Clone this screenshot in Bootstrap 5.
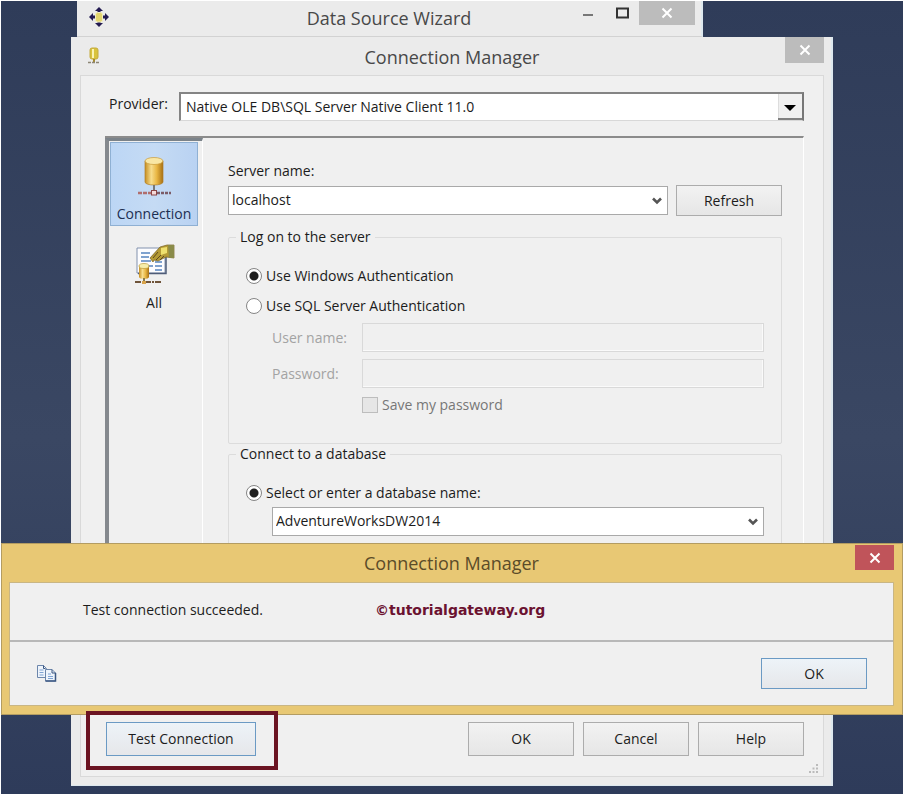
<!DOCTYPE html>
<html lang="en">
<head>
<meta charset="utf-8">
<meta name="viewport" content="width=device-width, initial-scale=1">
<title>Connection Manager</title>
<link href="https://cdn.jsdelivr.net/npm/bootstrap@5.3.0/dist/css/bootstrap.min.css" rel="stylesheet">
<style>
  body { font: 14px/20px "Open Sans", "Noto Sans", sans-serif; color: #1c1c1c; background: #fff; }
  .desktop { margin: 1px 2px 2px 1px; padding-bottom: 8px; background: linear-gradient(#2f3c59, #3a4763 55%, #2e3b5a); }
  .win { background: #ebebeb; border-right: 2px solid #dde8ee; }
  .win-back { margin-left: 76px; margin-right: 200px; height: 36px; border-bottom: 1px solid #d2d2d2; }
  .win-main { margin: 0 70px; padding: 0 7px 8px 9px; border-bottom: 1px solid #dde8ee; }
  .bar { position: relative; text-align: center; font-size: 18px; line-height: 34px; color: #484848; }
  .win-main .bar { height: 38px; line-height: 40px; }
  .bar-icon { position: absolute; left: 12px; top: 6px; }
  .win-main .bar-icon { left: 6px; top: 10px; }
  .bar-tools { position: absolute; right: 6px; top: 0; }
  .win-main .bar-tools { right: 0; }
  .tool { border: 0; padding: 0; background: transparent; width: 34px; height: 24px; display: block; }
  .tool svg { display: block; margin: auto; }
  .tool-close { background: #bcbcbc; width: 56px; }
  .win-main .tool-close { width: 39px; height: 26px; }
  .client { background: #f0f0f0; border: 1px solid #d9d9d9; padding: 16px 19px 6px 24px; }
  .provider-label { width: 74px; padding-left: 4px; margin-top: 2px; }
  .combo { height: 29px; font-size: 14px; line-height: 20px; color: #1c1c1c; border: 1px solid #a9a9a9; border-radius: 0; padding: 0 28px 1px 3px;
    background: #fff url("data:image/svg+xml,%3Csvg xmlns='http://www.w3.org/2000/svg' width='10' height='8'%3E%3Cpath d='M1 1.500 5 5.500l4-4' fill='none' stroke='%23555' stroke-width='2.600'/%3E%3C/svg%3E") no-repeat right 5px center / 10px 8px; }
  .combo-classic { border: 2px solid #848484; border-right-color: #777; border-bottom: 1px solid #d8d8d8; padding-left: 5px;
    background: #fff url("data:image/svg+xml,%3Csvg xmlns='http://www.w3.org/2000/svg' width='24' height='26'%3E%3Cpath fill='%23f0f0f0' d='M0 0h24v26H0z'/%3E%3Cpath fill='%23808080' d='M0 24h24v2H0z'/%3E%3Cpath fill='%23ddd' d='M0 0h1v24H0z'/%3E%3Cpath d='M6 11h12l-6 6z'/%3E%3C/svg%3E") no-repeat right 0 top 0 / 24px 26px; }
  .panel { margin-top: 15px; min-height: 570px; border-top: 2px solid #8b8b8b; border-right: 1px solid #fff; }
  .side { width: 98px; border-left: 4px solid #85898e; border-top: 3px solid #7b838a; border-right: 1px solid #fff; padding: 1px 4px 0 1px; }
  .side .nav-link { color: #1c1c1c; padding: 14px 0 0; height: 84px; border: 1px solid transparent; border-radius: 0; text-align: center; white-space: nowrap; }
  .side .nav-link svg { display: block; margin: 0 auto 7px; }
  .side .nav-link + .nav-link { padding-top: 17px; }
  .side .nav-link.active { background: linear-gradient(90deg, #bcd6f5, #c5dbf4 50%, #b9d2f2); border-color: #8fb0d3; color: #1c2f52; }
  .form-area { padding: 23px 21px 0 25px; }
  .group { border: 1px solid #dcdcdc; border-radius: 2px; padding: 0 17px; }
  .group legend { font-size: 14px; line-height: 20px; margin: 0 0 19px -10px; padding: 0 4px; }
  .group-login { margin-top: 11px; padding-bottom: 28px; }
  .radio-line { display: flex; align-items: center; gap: 4px; height: 20px; }
  .radio-line + .radio-line { margin-top: 10px; }
  .radio-line input, .check { appearance: none; flex: none; width: 16px; height: 16px; margin: 0; border: 1px solid #858585; border-radius: 50%; background: #fff; }
  .radio-line input:checked { background: radial-gradient(circle, #202020 4px, #fff 5px); }
  .check { border-radius: 0; border-color: #bdbdbd; background: #e6e6e6; }
  .indent { margin-left: 26px; }
  .field-gap { margin-top: 7px; }
  .field-label { width: 90px; color: #a3a3a3; }
  .save-label { color: #777; }
  .field { height: 29px; border: 1px solid #d9d9d9; border-radius: 0; background: #f0f0f0 !important; box-shadow: inset -1px -1px #fafafa; }
  .push { border: 1px solid #acacac; border-radius: 0; padding: 0; width: 106px; height: 34px; font-size: 14px; line-height: 20px; color: #1c1c1c; background: linear-gradient(#f2f2f2, #e6e6e6); }
  .push-short { height: 31px; flex: none; }
  .push-focus { border-color: #6b9ac4; background: linear-gradient(#edf3f8, #e6e7ea); }
  .push-wide { width: 150px; }
  .actions { margin-left: -19px; margin-top: 5px; gap: 9px; }
  .highlight { position: relative; z-index: 3; border: 4px solid #6b1422; padding: 7px 18px 10px 16px; margin-right: auto; }
  .push-row { padding-top: 11px; gap: 9px; }
  .grip { position: absolute; right: 4px; bottom: 2px; }
  .message { position: absolute; left: 0; right: 0; top: 542px; z-index: 2; background: #e8c874; border: 1px solid #b39c62; padding: 0 8px 8px 7px; }
  .message .bar { height: 38px; line-height: 38px; color: #5b4c29; }
  .message .bar-tools { right: 0; top: 1px; }
  .message .tool-close { width: 39px; height: 25px; background: #c0545a; }
  .message-body { background: #f0f0f0; border: 1px solid #c9b684; }
  .message-text { height: 59px; padding-left: 73px; padding-bottom: 4px; border-bottom: 2px solid #b8b8b8; }
  .credit { font: bold 14px/20px "DejaVu Sans", sans-serif; color: #6b1230; margin-left: 112px; }
  .message-foot { height: 63px; padding: 0 26px 0 27px; }
</style>
</head>
<body>
<svg width="0" height="0" class="position-absolute" aria-hidden="true">
  <defs>
    <linearGradient id="gold"><stop offset="0" stop-color="#c78f22"/><stop offset=".35" stop-color="#f7dd8c"/><stop offset=".65" stop-color="#e9b744"/><stop offset="1" stop-color="#a87012"/></linearGradient>
    <symbol id="cross" viewBox="0 0 12 12"><path d="M1.500 1.500l9 9m0-9l-9 9" stroke="#fff" stroke-width="2"/></symbol>
  </defs>
</svg>
<main class="desktop position-relative">
  <section class="win win-back">
    <div class="bar">
      <svg class="bar-icon" width="20" height="20" viewBox="0 0 20 20" aria-hidden="true"><path d="M10 0l4 4h-2.500v2.500h-3V4H6zM10 20l4-4h-2.500v-2.500h-3V16H6zM0 10l4-4v2.500h2.500v3H4V14zM20 10l-4-4v2.500h-2.500v3H16V14z" fill="#231a52"/><rect x="6.500" y="5.500" width="7" height="9.500" rx="2" fill="#e3d56e" stroke="#f3edc4"/></svg>
      Data Source Wizard
      <div class="bar-tools d-flex">
        <button class="tool" aria-label="Minimize"><svg width="10" height="12"><path d="M0 7h10v2H0z" fill="#777"/></svg></button>
        <button class="tool" aria-label="Maximize"><svg width="13" height="12"><path d="M1 1.500h11v9H1z" fill="none" stroke="#333" stroke-width="2"/></svg></button>
        <button class="tool tool-close" aria-label="Close"><svg width="12" height="12"><use href="#cross"/></svg></button>
      </div>
    </div>
  </section>

  <section class="win win-main">
    <div class="bar">
      <svg class="bar-icon" width="16" height="18" viewBox="0 0 16 18" aria-hidden="true"><rect x="4" y="1" width="8" height="11" rx="2" fill="#d9c33c" stroke="#c4ab3c"/><path d="M7 2v9" stroke="#faf3b4" stroke-width="2"/><path d="M8 12v3" stroke="#a58a31" stroke-width="2"/><path d="M2 15.500h12" stroke="#8d8676" stroke-width="1.500" stroke-dasharray="3 1"/></svg>
      Connection Manager
      <div class="bar-tools"><button class="tool tool-close" aria-label="Close"><svg width="12" height="12"><use href="#cross"/></svg></button></div>
    </div>
    <form class="client position-relative" onsubmit="return false">
      <div class="d-flex">
        <label class="provider-label flex-shrink-0" for="provider">Provider:</label>
        <select id="provider" class="form-select combo combo-classic"><option>Native OLE DB\SQL Server Native Client 11.0</option></select>
      </div>
      <div class="panel d-flex">
        <nav class="side nav flex-column flex-shrink-0">
          <a class="nav-link active" href="#connection">
            <svg width="34" height="40" viewBox="0 2 34 40" aria-hidden="true"><path d="M8 6v21c0 4 18 4 18 0V6z" fill="url(#gold)" stroke="#b17f25" stroke-width=".7"/><ellipse cx="17" cy="6" rx="9" ry="3.500" fill="#f9e7a4" stroke="#c99a38" stroke-width=".7"/><path d="M17 30v6" stroke="#777" stroke-width="2"/><path d="M1 38h14" stroke="#b06e6e" stroke-width="2.500" stroke-dasharray="4 1"/><path d="M20 38h14" stroke="#7b5c68" stroke-width="2.500" stroke-dasharray="3 1"/><rect x="14.500" y="35.500" width="5" height="4.500" fill="#f4dada" stroke="#8b4646"/></svg>
            Connection</a>
          <a class="nav-link" href="#all">
            <svg width="42" height="42" viewBox="0 2 42 42" aria-hidden="true"><path d="M4 6h28v25H4z" fill="#fdfdff" stroke="#8292ae"/><path d="M5 31.500h28V8" fill="none" stroke="#4e5c78" stroke-width="1.500"/><path d="M8 11h9M8 15h8M8 19h10M14 24h6M22 20h7M22 24h7M22 28h7" stroke="#5684c0" stroke-width="1.500"/><path d="M17 16l10-11 7-2h7v13l-8-1-8 4-4-1-1 2z" fill="#b49a35" stroke="#776021" stroke-width=".7"/><path d="M35 3h6v13h-5z" fill="#8a8b49"/><path d="M28 6l6-1v6l-6 2z" fill="#eee06e"/><path d="M20 16l5-6m-2 8l5-5m-1 5l4-4" stroke="#604b21"/><path d="M6 24v11c0 2.500 10 2.500 10 0V24z" fill="url(#gold)"/><ellipse cx="11" cy="24" rx="5" ry="2.500" fill="#f6edaa" stroke="#ba9b3a" stroke-width=".7"/><path d="M11 36v4" stroke="#897b4a" stroke-width="2"/><path d="M2 40h26" stroke="#6f543a" stroke-width="2" stroke-dasharray="6 1 2 1"/><path d="M9 39h4v3H9z" fill="#d9a44b"/></svg>
            All</a>
        </nav>
        <div class="form-area flex-grow-1">
          <label class="d-block mb-1" for="server">Server name:</label>
          <div class="d-flex align-items-center gap-2">
            <select id="server" class="form-select combo"><option>localhost</option></select>
            <button type="button" class="push push-short">Refresh</button>
          </div>
          <fieldset class="group group-login">
            <legend class="float-none w-auto">Log on to the server</legend>
            <label class="radio-line"><input type="radio" name="auth" checked>Use Windows Authentication</label>
            <label class="radio-line"><input type="radio" name="auth">Use SQL Server Authentication</label>
            <div class="d-flex align-items-center indent field-gap">
              <label class="field-label flex-shrink-0" for="user">User name:</label>
              <input id="user" type="text" class="form-control field" disabled>
            </div>
            <div class="d-flex align-items-center indent field-gap">
              <label class="field-label flex-shrink-0" for="pass">Password:</label>
              <input id="pass" type="password" class="form-control field" disabled>
            </div>
            <div class="d-flex indent field-gap">
              <span class="field-label flex-shrink-0"></span>
              <label class="d-flex align-items-center gap-1 save-label"><input type="checkbox" class="check" disabled>Save my password</label>
            </div>
          </fieldset>
          <fieldset class="group pb-5">
            <legend class="float-none w-auto">Connect to a database</legend>
            <label class="radio-line"><input type="radio" name="db" checked>Select or enter a database name:</label>
            <div class="indent mt-1"><select class="form-select combo" aria-label="Database name"><option>AdventureWorksDW2014</option></select></div>
          </fieldset>
        </div>
      </div>
      <div class="actions d-flex align-items-start">
        <div class="highlight"><button type="button" class="push push-wide push-focus d-block">Test Connection</button></div>
        <div class="push-row d-flex">
          <button type="button" class="push">OK</button>
          <button type="button" class="push">Cancel</button>
          <button type="button" class="push">Help</button>
        </div>
      </div>
      <svg class="grip" width="10" height="10" aria-hidden="true"><path d="M7 0h2v2H7zM3.500 3.500h2v2h-2zM7 3.500h2v2H7zM0 7h2v2H0zM3.500 7h2v2h-2zM7 7h2v2H7z" fill="#bbb"/></svg>
    </form>
  </section>

  <section class="message" role="dialog" aria-label="Connection Manager">
    <div class="bar">
      Connection Manager
      <div class="bar-tools"><button class="tool tool-close" aria-label="Close"><svg width="12" height="12"><use href="#cross"/></svg></button></div>
    </div>
    <div class="message-body">
      <div class="message-text d-flex align-items-center"><span>Test connection succeeded.</span><span class="credit">©tutorialgateway.org</span></div>
      <div class="message-foot d-flex align-items-center justify-content-between">
        <button class="tool w-auto" aria-label="Copy message"><svg width="20" height="17" viewBox="0 0 20 17"><g fill="#eef4fb" stroke="#6c86ab"><path d="M.5.500h6l3 3v9h-9z"/><path d="M8.500 4.500h6.500l3.500 3.500v8h-10z"/></g><path d="M8.500 16h10V8" fill="none" stroke="#3b5782" stroke-width="1.500"/><path d="M15 4.500V8h3.500M6.500.500v3h2" fill="none" stroke="#3b5782"/><path d="M2.500 5h4M2.500 7.500h4M2.500 10h4M11 9h3M11 11.500h5M11 13.500h5" stroke="#7fa3d3"/></svg></button>
        <button class="push push-short push-focus">OK</button>
      </div>
    </div>
  </section>
</main>
<script src="https://cdn.jsdelivr.net/npm/bootstrap@5.3.0/dist/js/bootstrap.bundle.min.js"></script>
</body>
</html>
